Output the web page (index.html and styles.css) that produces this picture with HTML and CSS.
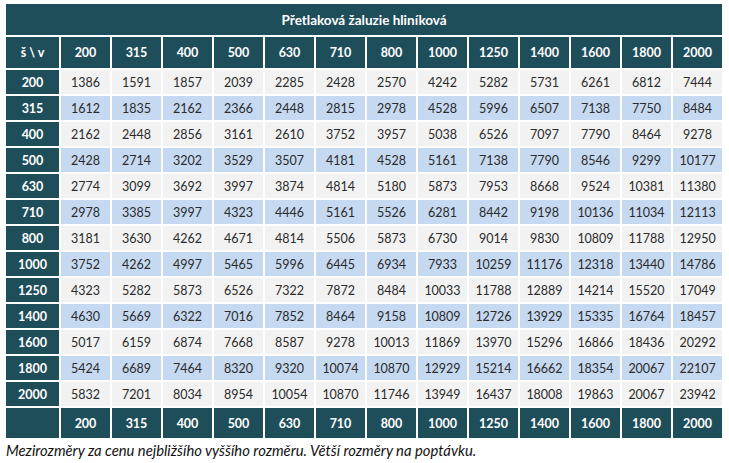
FILE: index.html
```html
<!DOCTYPE html>
<html lang="cs">
<head>
<meta charset="utf-8">
<title>Přetlaková žaluzie hliníková</title>
<link rel="stylesheet" href="styles.css">
</head>
<body>
<table class="price">
<colgroup><col class="c-first"><col span="13" class="c-val"></colgroup>
<thead>
<tr class="title-row"><th colspan="14">Přetlaková žaluzie hliníková</th></tr>
<tr class="head-row"><th>š \ v</th><th>200</th><th>315</th><th>400</th><th>500</th><th>630</th><th>710</th><th>800</th><th>1000</th><th>1250</th><th>1400</th><th>1600</th><th>1800</th><th>2000</th></tr>
</thead>
<tbody>
<tr class="odd"><th>200</th><td>1386</td><td>1591</td><td>1857</td><td>2039</td><td>2285</td><td>2428</td><td>2570</td><td>4242</td><td>5282</td><td>5731</td><td>6261</td><td>6812</td><td>7444</td></tr>
<tr class="even"><th>315</th><td>1612</td><td>1835</td><td>2162</td><td>2366</td><td>2448</td><td>2815</td><td>2978</td><td>4528</td><td>5996</td><td>6507</td><td>7138</td><td>7750</td><td>8484</td></tr>
<tr class="odd"><th>400</th><td>2162</td><td>2448</td><td>2856</td><td>3161</td><td>2610</td><td>3752</td><td>3957</td><td>5038</td><td>6526</td><td>7097</td><td>7790</td><td>8464</td><td>9278</td></tr>
<tr class="even"><th>500</th><td>2428</td><td>2714</td><td>3202</td><td>3529</td><td>3507</td><td>4181</td><td>4528</td><td>5161</td><td>7138</td><td>7790</td><td>8546</td><td>9299</td><td>10177</td></tr>
<tr class="odd"><th>630</th><td>2774</td><td>3099</td><td>3692</td><td>3997</td><td>3874</td><td>4814</td><td>5180</td><td>5873</td><td>7953</td><td>8668</td><td>9524</td><td>10381</td><td>11380</td></tr>
<tr class="even"><th>710</th><td>2978</td><td>3385</td><td>3997</td><td>4323</td><td>4446</td><td>5161</td><td>5526</td><td>6281</td><td>8442</td><td>9198</td><td>10136</td><td>11034</td><td>12113</td></tr>
<tr class="odd"><th>800</th><td>3181</td><td>3630</td><td>4262</td><td>4671</td><td>4814</td><td>5506</td><td>5873</td><td>6730</td><td>9014</td><td>9830</td><td>10809</td><td>11788</td><td>12950</td></tr>
<tr class="even"><th>1000</th><td>3752</td><td>4262</td><td>4997</td><td>5465</td><td>5996</td><td>6445</td><td>6934</td><td>7933</td><td>10259</td><td>11176</td><td>12318</td><td>13440</td><td>14786</td></tr>
<tr class="odd"><th>1250</th><td>4323</td><td>5282</td><td>5873</td><td>6526</td><td>7322</td><td>7872</td><td>8484</td><td>10033</td><td>11788</td><td>12889</td><td>14214</td><td>15520</td><td>17049</td></tr>
<tr class="even"><th>1400</th><td>4630</td><td>5669</td><td>6322</td><td>7016</td><td>7852</td><td>8464</td><td>9158</td><td>10809</td><td>12726</td><td>13929</td><td>15335</td><td>16764</td><td>18457</td></tr>
<tr class="odd"><th>1600</th><td>5017</td><td>6159</td><td>6874</td><td>7668</td><td>8587</td><td>9278</td><td>10013</td><td>11869</td><td>13970</td><td>15296</td><td>16866</td><td>18436</td><td>20292</td></tr>
<tr class="even"><th>1800</th><td>5424</td><td>6689</td><td>7464</td><td>8320</td><td>9320</td><td>10074</td><td>10870</td><td>12929</td><td>15214</td><td>16662</td><td>18354</td><td>20067</td><td>22107</td></tr>
<tr class="odd"><th>2000</th><td>5832</td><td>7201</td><td>8034</td><td>8954</td><td>10054</td><td>10870</td><td>11746</td><td>13949</td><td>16437</td><td>18008</td><td>19863</td><td>20067</td><td>23942</td></tr>
</tbody>
<tfoot>
<tr class="foot-row"><th></th><th>200</th><th>315</th><th>400</th><th>500</th><th>630</th><th>710</th><th>800</th><th>1000</th><th>1250</th><th>1400</th><th>1600</th><th>1800</th><th>2000</th></tr>
</tfoot>
</table>
<p class="note">Mezirozměry za cenu nejbližšího vyššího rozměru. Větší rozměry na poptávku.</p>
</body>
</html>
```
FILE: styles.css
```css
html, body {
  background: #ffffff;
}
body {
  margin: 2px 4px;
  font-family: Lato, "Open Sans", sans-serif;
  color: #2b2b2b;
}
.price {
  border-collapse: separate;
  border-spacing: 2px;
  table-layout: fixed;
  width: 720px;
  font-size: 12.5px;
}
.c-first { width: 53px; }
.c-val { width: 49px; }
.price th, .price td {
  padding: 0;
  text-align: center;
  vertical-align: middle;
  box-sizing: border-box;
}
.price th {
  background: #1f4e5b;
  color: #ffffff;
  font-weight: 700;
}
.title-row th {
  height: 31px;
  font-size: 13.5px;
}
.head-row th {
  height: 31px;
}
.price tbody tr th,
.price tbody tr td {
  height: 24px;
}
.price td {
  font-weight: 400;
}
.odd td { background: #f2f2f2; }
.even td { background: #c5d9f1; }
.foot-row th {
  height: 30px;
}
.note {
  margin: 2px 0 0 2px;
  font-size: 14.8px;
  line-height: 17px;
  font-style: italic;
  color: #111111;
}
```
